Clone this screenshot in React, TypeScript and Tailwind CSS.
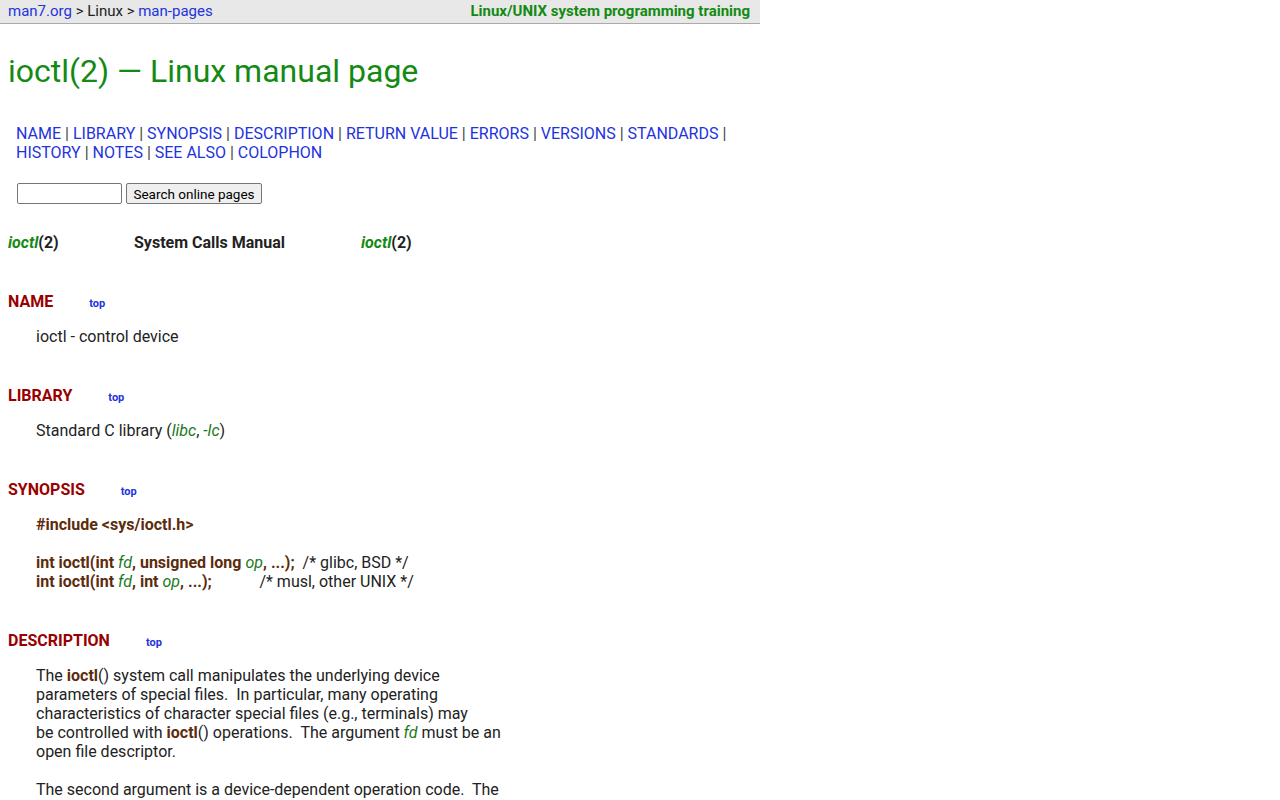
const font = { fontFamily: "Roboto, 'Liberation Sans', sans-serif" };

function Sep() {
  return <span className="text-[#444]"> | </span>;
}

function Heading({ title }: { title: string }) {
  return (
    <div className="flex items-baseline h-[19px]">
      <span className="font-bold text-[#990000] text-[16px]">{title}</span>
      <a className="text-[11px] font-bold text-[#2233dd] ml-[36px]">top</a>
    </div>
  );
}

const B = ({ children }: { children: React.ReactNode }) => (
  <b className="text-[#5c2c0c]">{children}</b>
);
const I = ({ children }: { children: React.ReactNode }) => (
  <i className="text-[#1a7a1a]">{children}</i>
);

export default function App() {
  const links = [
    "NAME",
    "LIBRARY",
    "SYNOPSIS",
    "DESCRIPTION",
    "RETURN VALUE",
    "ERRORS",
    "VERSIONS",
    "STANDARDS",
  ];
  const links2 = ["HISTORY", "NOTES", "SEE ALSO", "COLOPHON"];

  return (
    <div className="bg-white text-[#222] min-h-[800px]" style={font}>
      {/* top bar */}
      <div className="w-[760px] h-[24px] bg-[#e8e8e8] border-b border-[#aaa] flex items-center justify-between pl-2 pr-[10px] text-[15px]">
        <div>
          <a className="text-[#2233dd]">man7.org</a> &gt; Linux &gt;{" "}
          <a className="text-[#2233dd]">man-pages</a>
        </div>
        <div className="font-bold text-[#138a13]">
          Linux/UNIX system programming training
        </div>
      </div>

      <div className="px-2">
        <h1 className="text-[32px] text-[#138a13] leading-[38px] mt-[28px]">
          ioctl(2) — Linux manual page
        </h1>

        <div className="mt-[34px] pl-2 text-[16px] leading-[19px] text-[#2233dd]">
          <div>
            {links.map((l, i) => (
              <span key={l}>
                {i > 0 && <Sep />}
                <a>{l}</a>
              </span>
            ))}
            <Sep />
          </div>
          <div>
            {links2.map((l, i) => (
              <span key={l}>
                {i > 0 && <Sep />}
                <a>{l}</a>
              </span>
            ))}
          </div>
        </div>

        <div className="mt-[21px] pl-[9px] flex items-center gap-1">
          <input className="w-[105px] h-[21px] border border-[#767676] rounded-[2px] bg-white" />
          <button className="h-[21px] w-[136px] border border-[#767676] rounded-[2px] bg-[#efefef] text-[13.5px] text-black">
            Search online pages
          </button>
        </div>

        <div className="mt-[29px] flex font-bold text-[16px] leading-[19px] h-[19px]">
          <span className="w-[126px]">
            <i className="text-[#138a13]">ioctl</i>(2)
          </span>
          <span className="w-[227px]">System Calls Manual</span>
          <span>
            <i className="text-[#138a13]">ioctl</i>(2)
          </span>
        </div>

        <div className="text-[16px] leading-[19px]">
          <div className="mt-[40px]">
            <Heading title="NAME" />
          </div>
          <div className="pl-7 mt-[16px]">ioctl - control device</div>

          <div className="mt-[40px]">
            <Heading title="LIBRARY" />
          </div>
          <div className="pl-7 mt-[16px]">
            Standard C library (<I>libc</I>, <I>-lc</I>)
          </div>

          <div className="mt-[40px]">
            <Heading title="SYNOPSIS" />
          </div>
          <div className="pl-7 mt-[16px]">
            <div>
              <B>#include &lt;sys/ioctl.h&gt;</B>
            </div>
            <div className="h-[19px]" />
            <div className="whitespace-pre">
              <B>int ioctl(int </B>
              <I>fd</I>
              <B>, unsigned long </B>
              <I>op</I>
              <B>, ...);</B>
              {"  /* glibc, BSD */"}
            </div>
            <div className="whitespace-pre">
              <B>int ioctl(int </B>
              <I>fd</I>
              <B>, int </B>
              <I>op</I>
              <B>, ...);</B>
              {"            /* musl, other UNIX */"}
            </div>
          </div>

          <div className="mt-[40px]">
            <Heading title="DESCRIPTION" />
          </div>
          <div className="pl-7 mt-[16px] whitespace-pre">
            <div>
              The <B>ioctl</B>() system call manipulates the underlying device
            </div>
            <div>parameters of special files.  In particular, many operating</div>
            <div>characteristics of character special files (e.g., terminals) may</div>
            <div>
              be controlled with <B>ioctl</B>() operations.  The argument <I>fd</I> must be an
            </div>
            <div>open file descriptor.</div>
            <div className="h-[19px]" />
            <div>The second argument is a device-dependent operation code.  The</div>
          </div>
        </div>
      </div>
    </div>
  );
}
